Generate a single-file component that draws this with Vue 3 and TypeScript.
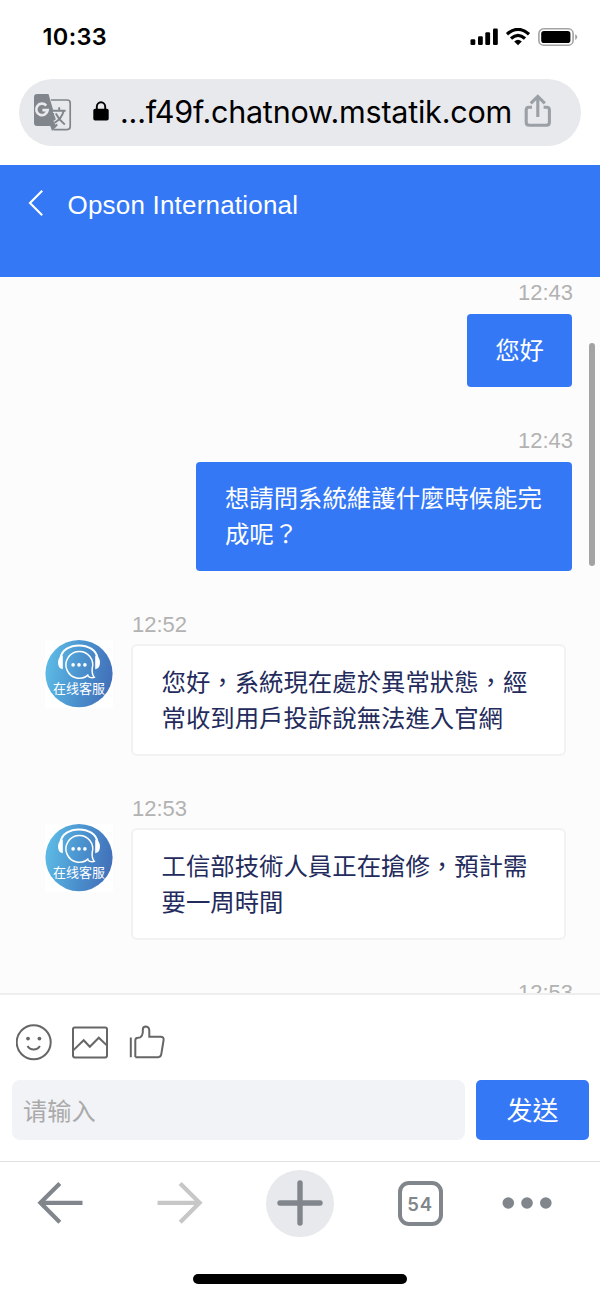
<script setup lang="ts">
interface Message {
  id: number
  from: 'me' | 'agent'
  time: string
  lines: string[]
}

const messages: Message[] = [
  { id: 1, from: 'me', time: '12:43', lines: ['您好'] },
  { id: 2, from: 'me', time: '12:43', lines: ['想請問系統維護什麼時候能完', '成呢？'] },
  { id: 3, from: 'agent', time: '12:52', lines: ['您好，系統現在處於異常狀態，經', '常收到用戶投訴說無法進入官網'] },
  { id: 4, from: 'agent', time: '12:53', lines: ['工信部技術人員正在搶修，預計需', '要一周時間'] },
  { id: 5, from: 'me', time: '12:53', lines: [] },
]
</script>

<template>
  <div class="screen">
    <div class="status">
      <span class="clock">10:33</span>
      <svg class="status-icons" width="108" height="20" viewBox="0 0 108 20">
        <rect x="0.5" y="11.2" width="4.8" height="5.8" rx="1.3" />
        <rect x="8" y="8.2" width="4.8" height="8.8" rx="1.3" />
        <rect x="15.3" y="4.2" width="4.8" height="12.8" rx="1.3" />
        <rect x="23" y="0.6" width="4.8" height="16.4" rx="1.3" />
        <g fill="none" stroke="#000" stroke-width="3.2">
          <path d="M37 6.2Q48 -3.4 59 6.2" />
          <path d="M41 10.5Q48 4.3 55 10.5" />
        </g>
        <path d="M44.2 13.4Q48 10.2 51.8 13.4L48 17.2Z" />
        <rect x="68.9" y="0.8" width="34.2" height="16.4" rx="4.8" fill="none" stroke="#a3a3a3" stroke-width="1.6" />
        <rect x="71.2" y="3" width="29.2" height="12" rx="2.8" />
        <path d="M105.2 6.2Q107.4 7.4 107.4 9T105.2 12Z" fill="#a3a3a3" />
      </svg>
    </div>

    <div class="address">
      <svg class="translate" width="39" height="39" viewBox="0 0 39 39">
        <path d="M18 7H34.2Q37.2 7 37.2 10V33.6Q37.2 36.6 34.2 36.6H20.5" fill="none" stroke="#80868b" stroke-width="1.7" />
        <path d="M4 1H15.5L24.6 32.4L19 38L17.3 33H4Q1 33 1 30V4Q1 1 4 1Z" fill="#80868b" />
        <path d="M13.2 12.6A5.7 5.7 0 1 0 14.6 17.2H9.4" fill="none" stroke="#e8e9ed" stroke-width="2.7" />
        <path d="M20 17.8H32.6M26.2 14.2V17.8M30.6 18.2Q28.5 26 21.4 29.8M22.8 20.5Q26 27 31.8 31.6" fill="none" stroke="#e8e9ed" stroke-width="4.2" />
        <path d="M20 17.8H32.6M26.2 14.2V17.8M30.6 18.2Q28.5 26 21.4 29.8M22.8 20.5Q26 27 31.8 31.6" fill="none" stroke="#80868b" stroke-width="1.9" />
      </svg>
      <svg class="lock" width="16" height="20" viewBox="0 0 16 20">
        <path d="M3.8 9V5.8A4.2 4.6 0 0 1 12.2 5.8V9" fill="none" stroke="#000" stroke-width="1.9" />
        <rect x="0.3" y="7.8" width="15.4" height="11.7" rx="1.8" />
      </svg>
      <span class="url">...f49f.chatnow.mstatik.com</span>
      <svg class="share" width="28" height="36" viewBox="0 0 28 36">
        <g fill="none" stroke="#9aa0a6" stroke-width="3.1">
          <path d="M8 14.2H5Q2.2 14.2 2.2 17V29.2Q2.2 32.2 5.2 32.2H22.4Q25.4 32.2 25.4 29.2V17Q25.4 14.2 22.6 14.2H19.6" />
          <path d="M13.8 24V4M6.8 10.4L13.8 3.4L20.8 10.4" />
        </g>
      </svg>
    </div>

    <header class="header">
      <svg class="back" width="16" height="28" viewBox="0 0 16 28">
        <path d="M14.2 1.8L2 14.1L14.2 26.2" fill="none" stroke="#fff" stroke-width="2.1" />
      </svg>
      <span class="title">Opson International</span>
    </header>

    <main class="chat">
      <section v-for="m in messages" :key="m.id" class="row" :class="m.from">
        <div class="time">{{ m.time }}</div>
        <div class="content">
          <div v-if="m.from === 'agent'" class="avatar">
            <svg width="68" height="68" viewBox="0 0 68 68">
              <defs>
                <linearGradient :id="'shade' + m.id" x1="0" y1="0.4" x2="1" y2="0.6">
                  <stop offset="0" stop-color="#5dbbe5" />
                  <stop offset="0.5" stop-color="#4b93cf" />
                  <stop offset="1" stop-color="#426fb8" />
                </linearGradient>
              </defs>
              <circle cx="34" cy="33.6" r="33.6" :fill="'url(#shade' + m.id + ')'" />
              <path d="M15.4 18.5C17.5 1 50.5 1 52.6 18.5" fill="none" stroke="#fff" stroke-width="2" />
              <path d="M17.8 15.4V29.2Q13 28.6 13 22.6T17.8 15.4ZM50.2 15.4V29.2Q55 28.6 55 22.6T50.2 15.4Z" fill="#fff" />
              <path d="M43.5 34.6A13.4 13.4 0 1 1 47.2 28.6Q46.6 34 49.3 37.4Q46 38.4 43 36.4" fill="none" stroke="#fff" stroke-width="1.5" />
              <g fill="#fff">
                <circle cx="28.1" cy="24.9" r="1.8" />
                <circle cx="34" cy="24.9" r="1.8" />
                <circle cx="39.9" cy="24.9" r="1.8" />
              </g>
              <text x="34" y="53" text-anchor="middle">在线客服</text>
            </svg>
          </div>
          <div v-if="m.lines.length" class="bubble">
            <div v-for="line in m.lines" :key="line" class="line">{{ line }}</div>
          </div>
        </div>
      </section>
      <div class="scrollbar"></div>
    </main>

    <footer class="composer">
      <div class="tools">
        <svg width="36" height="38" viewBox="0 0 36 38">
          <g fill="none" stroke="#666" stroke-width="2">
            <circle cx="17.7" cy="19.2" r="17" />
            <path d="M11.5 23Q13.5 26.4 17.7 26.4T23.9 23" />
          </g>
          <circle cx="12" cy="15.6" r="1.9" fill="#666" />
          <circle cx="23.4" cy="15.6" r="1.9" fill="#666" />
        </svg>
        <svg width="36" height="38" viewBox="0 0 36 38">
          <g fill="none" stroke="#666" stroke-width="2">
            <rect x="1" y="4.4" width="34" height="30" rx="1.8" />
            <path d="M1.2 27.4L11.7 17.2L17.8 23.7L26.8 14.7L34.8 22.4" />
          </g>
        </svg>
        <svg width="37" height="38" viewBox="0 0 37 38">
          <path d="M2.8 14.6V34.2M7.3 34V17.5Q7.3 15 9.8 14.8L12.2 14.4Q14.6 12.8 14.8 9.5V6.8Q14.8 3.6 18 3.6Q21.3 3.8 21.3 8V13.8H32.8Q36 13.8 35.6 17L33.3 31.2Q32.8 34.2 30.2 34.2H7.3" fill="none" stroke="#666" stroke-width="2" />
        </svg>
      </div>
      <div class="entry">
        <div class="input">请输入</div>
        <button class="send">发送</button>
      </div>
    </footer>

    <nav class="toolbar">
      <div class="tab">
        <svg width="46" height="46" viewBox="0 0 46 46">
          <path d="M45.5 22.8H4M22.8 3.4L3.4 22.8L22.8 42.2" fill="none" stroke="#80868b" stroke-width="4.2" />
        </svg>
      </div>
      <div class="tab">
        <svg width="46" height="46" viewBox="0 0 46 46">
          <path d="M0.5 22.8H42M23.2 3.4L42.6 22.8L23.2 42.2" fill="none" stroke="#c7c7c7" stroke-width="4.2" />
        </svg>
      </div>
      <div class="tab">
        <div class="plus">
          <svg width="46" height="46" viewBox="0 0 46 46">
            <path d="M23 3V43M3 23H43" fill="none" stroke="#80868b" stroke-width="5.4" stroke-linecap="round" />
          </svg>
        </div>
      </div>
      <div class="tab"><div class="count">54</div></div>
      <div class="tab">
        <svg width="50" height="12" viewBox="0 0 50 12" fill="#80868b">
          <circle cx="6.3" cy="6" r="5.8" />
          <circle cx="25" cy="6" r="5.8" />
          <circle cx="43.8" cy="6" r="5.8" />
        </svg>
      </div>
    </nav>
    <div class="home"></div>
  </div>
</template>

<style>
body {
  margin: 0;
  background: #fff;
}
</style>

<style scoped>
.screen {
  width: 600px;
  height: 1299px;
  overflow: hidden;
  display: flex;
  flex-direction: column;
  background: #fff;
  font-family: "Liberation Sans", "Noto Sans CJK TC", sans-serif;
}
svg {
  display: block;
  flex: none;
}
.status {
  height: 79px;
  box-sizing: border-box;
  padding: 22px 22.5px 0 42.5px;
  display: flex;
  justify-content: space-between;
}
.clock {
  height: 30px;
  font: 600 23.5px/30px Inter, sans-serif;
  letter-spacing: 0.35px;
}
.status-icons {
  margin-top: 6px;
}
.address {
  height: 67px;
  margin: 0 19px 19px;
  border-radius: 34px;
  background: #e8e9ed;
  display: flex;
  align-items: center;
  box-sizing: border-box;
  padding-left: 14px;
  white-space: nowrap;
}
.lock {
  margin: -3px 0 0 21px;
}
.url {
  width: 391px;
  margin: -2px 0 0 11px;
  font: 400 30.5px/40px Inter, sans-serif;
  letter-spacing: -0.22px;
}
.share {
  margin: -3px 0 0 13px;
}
.header {
  height: 112px;
  flex: none;
  box-sizing: border-box;
  padding: 24px 28px 0;
  display: flex;
  background: #3478f6;
  color: #fff;
}
.title {
  margin-left: 23.5px;
  font-size: 26px;
  line-height: 32px;
  letter-spacing: 0.2px;
}
.chat {
  position: relative;
  height: 716px;
  flex: none;
  box-sizing: border-box;
  padding-top: 2px;
  overflow: hidden;
  background: #fcfcfc;
}
.row {
  height: 184px;
}
.row:first-child {
  height: 148px;
}
.row:last-child {
  margin-top: -1px;
}
.time {
  height: 28px;
  line-height: 28px;
  font-size: 22px;
  color: #b2b2b2;
}
.content {
  display: flex;
}
.me .time {
  text-align: right;
  padding-right: 27px;
}
.me .content {
  justify-content: flex-end;
  padding: 6.5px 28px 0 0;
}
.agent .time {
  padding-left: 132px;
}
.agent .content {
  padding: 0.5px 0 0 45px;
}
.avatar {
  width: 68px;
  height: 68px;
  background: #fff;
}
.avatar text {
  font: 13px "Noto Sans CJK SC", sans-serif;
  fill: #fff;
}
.bubble {
  box-sizing: border-box;
  padding: 19px 30px 18px 28.5px;
  border-radius: 4px;
  font-size: 24.4px;
  line-height: 36px;
  white-space: nowrap;
}
.line {
  height: 36px;
}
.me .bubble {
  background: #3478f6;
  color: #fff;
}
.row:first-child .bubble {
  padding-right: 28px;
}
.agent .bubble {
  width: 435px;
  height: 112px;
  margin: 4px 0 0 18px;
  border: 2px solid #f2f2f2;
  border-radius: 6px;
  background: #fff;
  color: #232b5c;
}
.scrollbar {
  position: absolute;
  top: 66px;
  right: 5.5px;
  width: 6px;
  height: 222.5px;
  border-radius: 3px;
  background: #a3a3a3;
}
.composer {
  height: 168px;
  flex: none;
  box-sizing: border-box;
  border-top: 2px solid #eee;
}
.tools {
  display: flex;
  gap: 20px;
  padding: 28px 0 0 16px;
}
.entry {
  display: flex;
  gap: 11px;
  padding: 18.5px 11px 0 11.5px;
}
.input {
  width: 453.5px;
  height: 60px;
  box-sizing: border-box;
  padding-left: 11.5px;
  border-radius: 8px;
  background: #f2f3f7;
  color: #aaa;
  font: 24.2px/59px "Noto Sans CJK SC", sans-serif;
}
.send {
  width: 113px;
  height: 60px;
  padding: 0 0 2px;
  border: 0;
  border-radius: 5px;
  background: #3478f6;
  color: #fff;
  font: 26px/58px "Noto Sans CJK TC", sans-serif;
}
.toolbar {
  height: 113px;
  flex: none;
  box-sizing: border-box;
  padding-top: 7.5px;
  border-top: 1px solid #dfe0e2;
  display: grid;
  grid-template-columns: repeat(4, 120px) 94px;
  grid-template-rows: 67.5px;
}
.tab {
  display: flex;
  align-items: center;
  justify-content: center;
}
.plus {
  width: 67.5px;
  height: 67.5px;
  border-radius: 50%;
  background: #e8e9ed;
  display: flex;
  align-items: center;
  justify-content: center;
}
.count {
  box-sizing: border-box;
  width: 45px;
  height: 45px;
  border: 4px solid #80868b;
  border-radius: 11px;
  color: #80868b;
  text-align: center;
  font: 600 18.5px/38px Inter, sans-serif;
  letter-spacing: 0.8px;
}
.home {
  width: 214px;
  height: 10px;
  margin: 0 auto;
  border-radius: 5px;
  background: #000;
}
</style>
